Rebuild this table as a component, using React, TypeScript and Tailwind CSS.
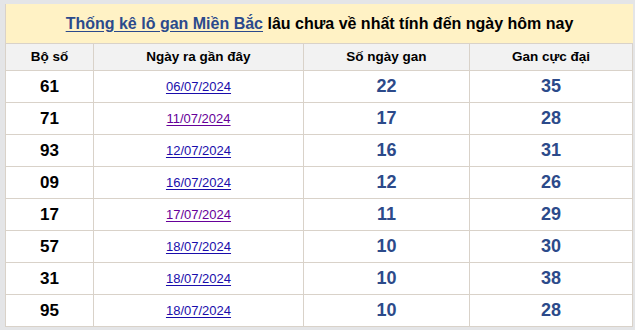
import React from "react";

const rows = [
  { so: "61", date: "06/07/2024", gan: 22, max: 35, visited: false },
  { so: "71", date: "11/07/2024", gan: 17, max: 28, visited: true },
  { so: "93", date: "12/07/2024", gan: 16, max: 31, visited: false },
  { so: "09", date: "16/07/2024", gan: 12, max: 26, visited: false },
  { so: "17", date: "17/07/2024", gan: 11, max: 29, visited: true },
  { so: "57", date: "18/07/2024", gan: 10, max: 30, visited: false },
  { so: "31", date: "18/07/2024", gan: 10, max: 38, visited: false },
  { so: "95", date: "18/07/2024", gan: 10, max: 28, visited: false },
];

function App() {
  return (
    <div className="w-[635px] h-[330px] overflow-hidden bg-[#e4e5e7] pt-[4px] pl-[5px] pr-[2px] font-['Liberation_Sans',Arial,sans-serif]">
      <div className="bg-white">
        <div className="h-[39px] bg-[#fff2c5] flex items-center justify-center border-l border-[#d9d2c9] text-[16px] font-bold text-black">
          <a href="#" className="text-[#2b4a8c] underline underline-offset-2">
            Thống kê lô gan Miền Bắc
          </a>
          <span>&nbsp;lâu chưa về nhất tính đến ngày hôm nay</span>
        </div>
        <table className="w-full border-collapse table-fixed">
          <colgroup>
            <col className="w-[88px]" />
            <col className="w-[210px]" />
            <col className="w-[166px]" />
            <col />
          </colgroup>
          <thead>
            <tr className="h-[27px] bg-[#f2f2f2] text-[13.5px] font-bold text-black">
              <th className="border border-[#d9d2c9] font-bold">Bộ số</th>
              <th className="border border-[#d9d2c9] font-bold">Ngày ra gần đây</th>
              <th className="border border-[#d9d2c9] font-bold">Số ngày gan</th>
              <th className="border border-[#d9d2c9] font-bold">Gan cực đại</th>
            </tr>
          </thead>
          <tbody>
            {rows.map((r, i) => (
              <tr key={i} className="h-[32px] text-center">
                <td className="border border-[#d9d2c9] text-[17px] font-bold text-black">{r.so}</td>
                <td className="border border-[#d9d2c9] text-[13px]">
                  <a
                    href="#"
                    className={
                      r.visited
                        ? "text-[#660099] underline underline-offset-2"
                        : "text-[#1a0dab] underline underline-offset-2"
                    }
                  >
                    {r.date}
                  </a>
                </td>
                <td className="border border-[#d9d2c9] text-[18px] font-bold text-[#2c4a8a]">{r.gan}</td>
                <td className="border border-[#d9d2c9] text-[18px] font-bold text-[#2c4a8a]">{r.max}</td>
              </tr>
            ))}
          </tbody>
        </table>
      </div>
      <div className="mt-[3px] h-[4px] bg-[#fff9dc]" />
    </div>
  );
}

export default App;
